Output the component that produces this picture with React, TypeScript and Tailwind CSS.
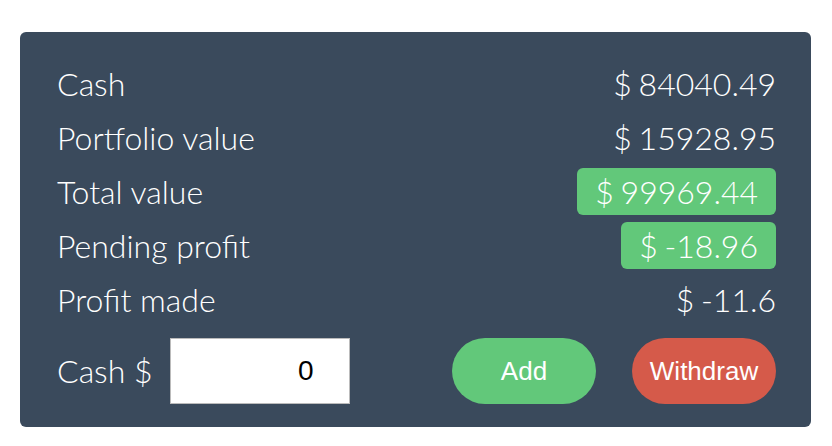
import React from "react";

const rows: { label: string; value: string; badge?: boolean }[] = [
  { label: "Cash", value: "$ 84040.49" },
  { label: "Portfolio value", value: "$ 15928.95" },
  { label: "Total value", value: "$ 99969.44", badge: true },
  { label: "Pending profit", value: "$ -18.96", badge: true },
  { label: "Profit made", value: "$ -11.6" },
];

export default function App() {
  return (
    <div className="w-[832px] h-[446px] bg-white pt-[32px] pl-[20px]">
      <div
        className="w-[791px] h-[395px] bg-[#3a4a5c] rounded-[6px] pt-[28px] pl-[37px] pr-[35px] pb-[23px] flex flex-col text-white"
        style={{ fontFamily: "Lato, 'Open Sans', sans-serif" }}
      >
        <div className="flex flex-col gap-[7px]">
          {rows.map((r) => (
            <div key={r.label} className="flex items-center justify-between h-[47px] text-[32px] font-light leading-none">
              <span>{r.label}</span>
              {r.badge ? (
                <span className="bg-[#62c87a] rounded-[6px] h-[47px] px-[18px] flex items-center [word-spacing:-2px]">{r.value}</span>
              ) : (
                <span className="[word-spacing:-2px]">{r.value}</span>
              )}
            </div>
          ))}
        </div>
        <div className="mt-auto flex items-center h-[66px]" style={{ fontFamily: "'Liberation Sans', Arial, sans-serif" }}>
          <span className="text-[32px] font-light leading-none mr-[17px]" style={{ fontFamily: "Lato, sans-serif" }}>
            Cash $
          </span>
          <input
            readOnly
            value="0"
            className="w-[180px] h-[66px] bg-white border border-[#bbbbbb] text-black text-right pr-[35px] text-[28px] outline-none"
          />
          <button className="ml-auto w-[144px] h-[66px] rounded-full bg-[#62c87a] text-white text-[26px]">Add</button>
          <button className="ml-[36px] w-[144px] h-[66px] rounded-full bg-[#d55a4a] text-white text-[26px]">Withdraw</button>
        </div>
      </div>
    </div>
  );
}
